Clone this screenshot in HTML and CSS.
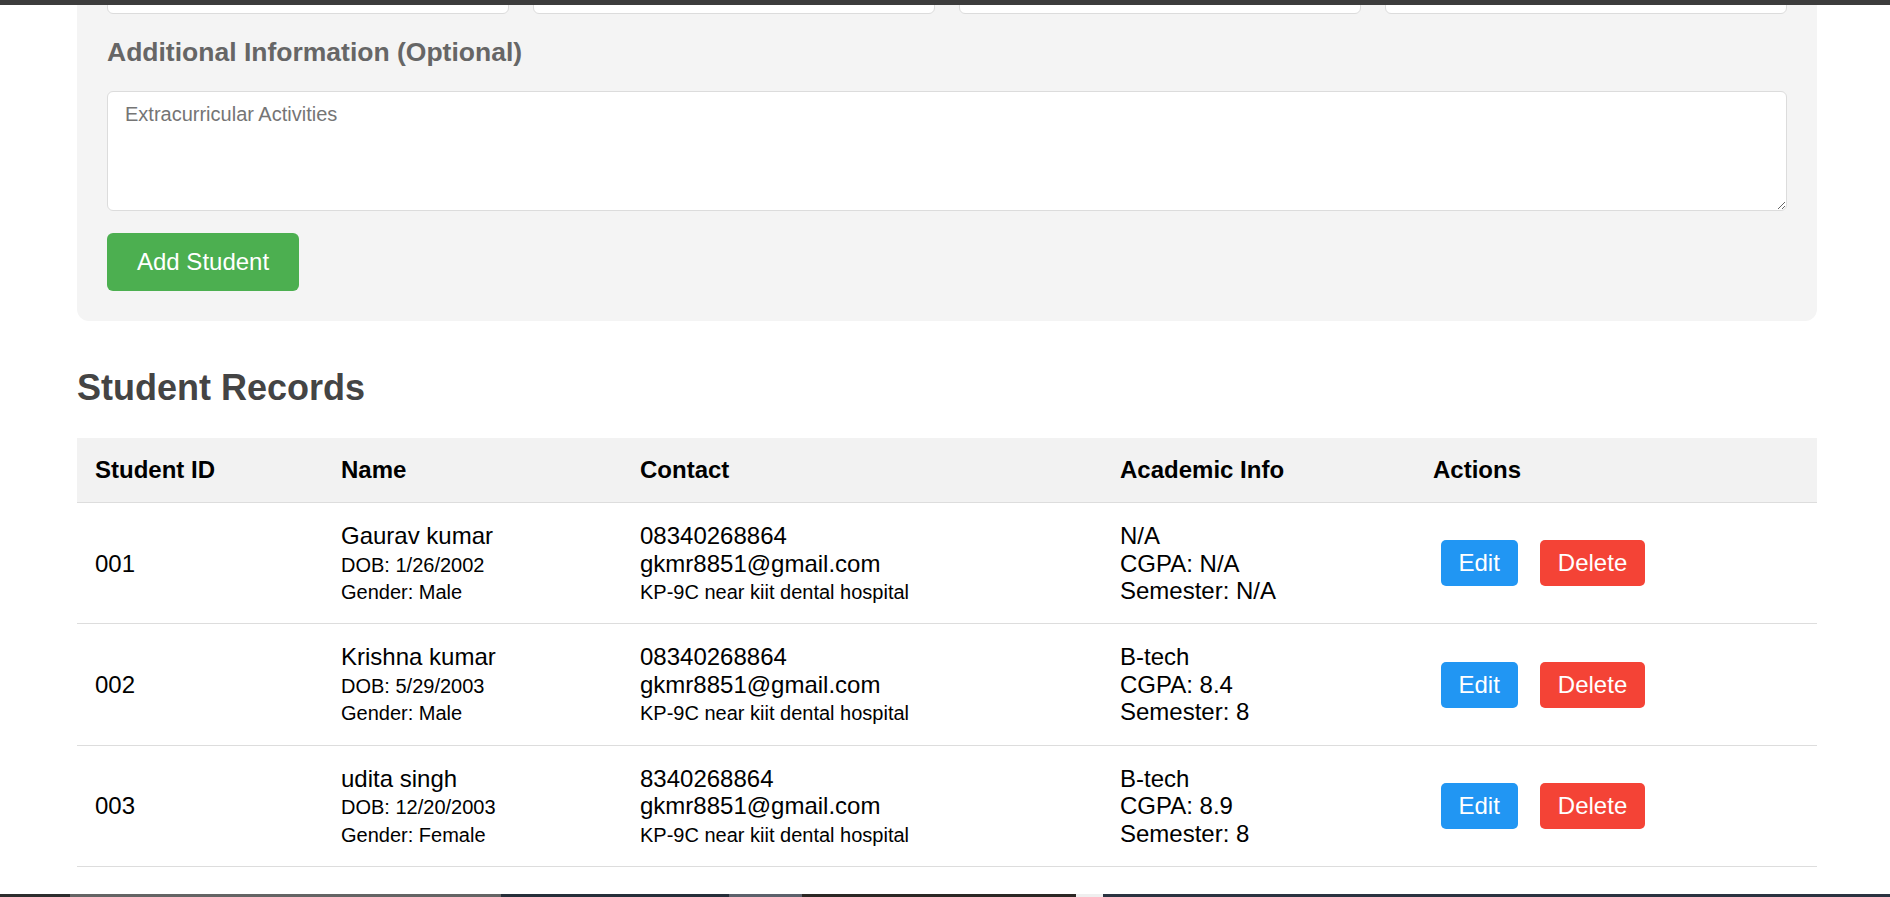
FILE: index.html
```html
<!DOCTYPE html>
<html lang="en">
<head>
<meta charset="utf-8">
<title>Student Records</title>
<link rel="stylesheet" href="styles.css">
</head>
<body>
<div class="topbar"></div>
<main class="container">
  <form class="panel">
    <div class="grid4">
      <input class="field" type="text" placeholder="Department">
      <input class="field" type="text" placeholder="Course">
      <input class="field" type="text" placeholder="CGPA">
      <input class="field" type="text" placeholder="Semester">
    </div>
    <h3 class="section-title">Additional Information (Optional)</h3>
    <textarea class="field textarea" placeholder="Extracurricular Activities"></textarea>
    <button class="btn btn-add" type="button">Add Student</button>
  </form>

  <h2 class="records-title">Student Records</h2>
  <table class="records">
    <colgroup>
      <col class="c-id"><col class="c-name"><col class="c-contact"><col class="c-acad"><col class="c-act">
    </colgroup>
    <thead>
      <tr><th>Student ID</th><th>Name</th><th>Contact</th><th>Academic Info</th><th>Actions</th></tr>
    </thead>
    <tbody>
      <tr>
        <td>001</td>
        <td>Gaurav kumar<br><small>DOB: 1/26/2002</small><br><small>Gender: Male</small></td>
        <td>08340268864<br>gkmr8851@gmail.com<br><small>KP-9C near kiit dental hospital</small></td>
        <td>N/A<br>CGPA: N/A<br>Semester: N/A</td>
        <td class="actions"><button class="btn btn-edit" type="button">Edit</button><button class="btn btn-delete" type="button">Delete</button></td>
      </tr>
      <tr>
        <td>002</td>
        <td>Krishna kumar<br><small>DOB: 5/29/2003</small><br><small>Gender: Male</small></td>
        <td>08340268864<br>gkmr8851@gmail.com<br><small>KP-9C near kiit dental hospital</small></td>
        <td>B-tech<br>CGPA: 8.4<br>Semester: 8</td>
        <td class="actions"><button class="btn btn-edit" type="button">Edit</button><button class="btn btn-delete" type="button">Delete</button></td>
      </tr>
      <tr>
        <td>003</td>
        <td>udita singh<br><small>DOB: 12/20/2003</small><br><small>Gender: Female</small></td>
        <td>8340268864<br>gkmr8851@gmail.com<br><small>KP-9C near kiit dental hospital</small></td>
        <td>B-tech<br>CGPA: 8.9<br>Semester: 8</td>
        <td class="actions"><button class="btn btn-edit" type="button">Edit</button><button class="btn btn-delete" type="button">Delete</button></td>
      </tr>
    </tbody>
  </table>
</main>
<div class="taskbar">
  <span class="seg s1"></span><span class="seg s2"></span><span class="seg s3"></span><span class="seg s4"></span><span class="seg s5"></span><span class="seg s6"></span><span class="seg s7"></span>
</div>
</body>
</html>
```
FILE: styles.css
```css
* { box-sizing: border-box; }
html, body { margin: 0; padding: 0; background: #fff; }
body {
  font-family: "Liberation Sans", Arial, sans-serif;
  color: #000;
  overflow: hidden;
}

.topbar {
  position: fixed;
  top: 0; left: 0; right: 0;
  height: 5px;
  background: #3c3c3c;
  z-index: 10;
}

.taskbar {
  position: fixed;
  left: 0; right: 0; bottom: 0;
  height: 3px;
  display: flex;
  z-index: 10;
}
.seg { display: block; height: 100%; }
.s1 { width: 70px; background: #2d2d2d; }
.s2 { width: 431px; background: #646464; }
.s3 { width: 228px; background: #262e39; }
.s4 { width: 73px; background: #5c616b; }
.s5 { width: 274px; background: #2b2724; }
.s6 { width: 27px; background: #efefef; }
.s7 { flex: 1; background: #2a3340; }

.container {
  width: 1740px;
  margin: -64px 0 0 77px;
}

.panel {
  background: #f4f4f4;
  border-radius: 12px;
  padding: 30px;
}

.grid4 {
  display: grid;
  grid-template-columns: repeat(4, 1fr);
  gap: 24px;
}

.field {
  display: block;
  width: 100%;
  height: 48px;
  border: 1px solid #dcdcdc;
  border-radius: 6px;
  background: #fff;
  font-family: "Liberation Sans", Arial, sans-serif;
  font-size: 20px;
  padding: 12px 17px;
  color: #000;
}
.field::placeholder { color: #757575; }

.section-title {
  margin: 23px 0 24px;
  font-size: 26.5px;
  font-weight: bold;
  color: #666;
  line-height: 30px;
}

.textarea {
  height: 120px;
  resize: vertical;
  margin: 0 0 22px;
  padding: 11px 17px;
}

.btn {
  font-family: "Liberation Sans", Arial, sans-serif;
  border: none;
  color: #fff;
  cursor: pointer;
}

.btn-add {
  display: block;
  background: #4caf50;
  font-size: 24px;
  line-height: 28px;
  padding: 15px 30px;
  border-radius: 6px;
}

.records-title {
  margin: 46px 0 30px;
  font-size: 36px;
  font-weight: bold;
  color: #444;
  line-height: 41px;
}

.records {
  width: 100%;
  border-collapse: collapse;
  table-layout: fixed;
  font-size: 24px;
}
.c-id { width: 246px; }
.c-name { width: 299px; }
.c-contact { width: 480px; }
.c-acad { width: 313px; }
.c-act { width: 402px; }

.records th {
  background: #f2f2f2;
  text-align: left;
  font-weight: bold;
  padding: 18px;
  line-height: 28px;
  border-bottom: 1px solid #dddddd;
}
.records td {
  padding: 19px 18px 18.5px;
  line-height: 27.6px;
  vertical-align: middle;
  border-bottom: 1px solid #dddddd;
}
.records small { font-size: 20px; line-height: 1; }

.actions { white-space: nowrap; }
.btn-edit, .btn-delete {
  display: inline-block;
  font-size: 24px;
  line-height: 28px;
  padding: 9px 18px;
  border-radius: 5px;
  margin: 0 7.5px;
  vertical-align: middle;
}
.btn-edit { background: #2196f3; }
.btn-delete { background: #f44336; margin-left: 14.5px; }
```
